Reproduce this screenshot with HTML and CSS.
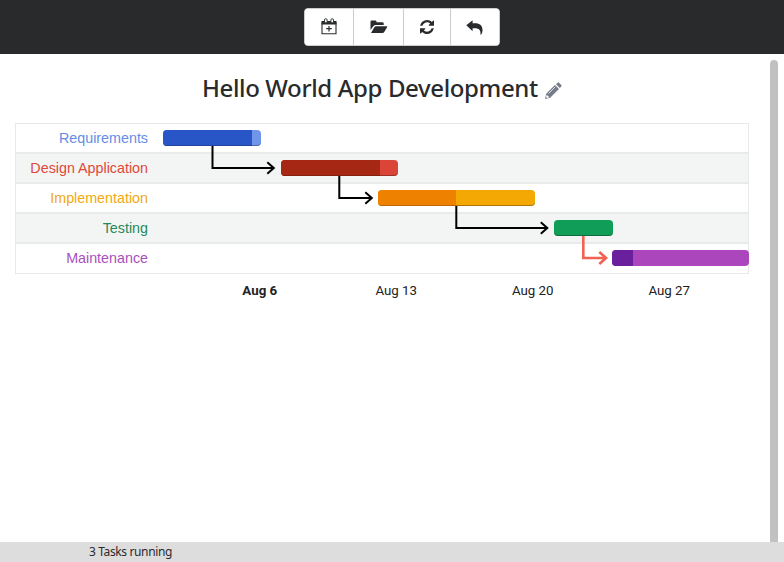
FILE: index.html
```html
<!DOCTYPE html>
<html lang="en">
<head>
<meta charset="utf-8">
<title>Hello World App Development</title>
<link rel="stylesheet" href="styles.css">
</head>
<body>
<header class="topbar">
  <div class="tools">
    <button class="tool tool-new" aria-label="New">
      <svg width="16" height="17" viewBox="0 0 16 17"><path fill="#292b2d" d="M.5 3h15v3.500H.5z"/><path fill="none" stroke="#292b2d" stroke-width="1.1" d="M1 4.500v11.300h14V4.500"/><path fill="#fff" stroke="#292b2d" stroke-width=".9" d="M3.500 4.800V2a1.300 1.300 0 0 1 2.600 0v2.800zM9.900 4.800V2a1.300 1.300 0 0 1 2.600 0v2.800z"/><path stroke="#292b2d" stroke-width="1.200" d="M5.200 10.700h5.600M8 7.900v5.600"/></svg>
    </button>
    <button class="tool tool-open" aria-label="Open">
      <svg width="18" height="14" viewBox="0 0 18 14"><path fill="#292b2d" d="M.5 10V1.700Q.5.500 1.700.500h3.600q1.200 0 1.200 1.200v.6h6q1.200 0 1.200 1.200V5H5.800Q4.300 5 3.300 6.200zM1 13l3.200-5.600q.7-1.200 2-1.200h10.300q1.300 0 .6 1.100l-2.700 4.500q-.7 1.200-2 1.200z"/></svg>
    </button>
    <button class="tool tool-sync" aria-label="Refresh">
      <svg width="14" height="14" viewBox="0 0 1536 1536"><path fill="#292b2d" d="M1511 928q0 5-1 7-64 268-268 434.500T764 1536q-146 0-282.500-55T238 1324l-129 129q-19 19-45 19t-45-19-19-45V960q0-26 19-45t45-19h448q26 0 45 19t19 45-19 45l-137 137q71 66 161 102t187 36q134 0 250-65t186-179q11-17 53-117 8-23 30-23h192q13 0 22.500 9.500t9.500 22.500zM1536 128v448q0 26-19 45t-45 19h-448q-26 0-45-19t-19-45 19-45l138-138Q969 256 768 256q-134 0-250 65T332 500q-11 17-53 117-8 23-30 23H50q-13 0-22.500-9.500T18 608v-7q65-268 270-434.500T768 0q146 0 284 55.500T1297 212l130-129q19-19 45-19t45 19 19 45z"/></svg>
    </button>
    <button class="tool tool-undo" aria-label="Undo">
      <svg width="17" height="15" viewBox="0 0 17 15"><path fill="#292b2d" d="M.3 5.300 6.600.300v3H9c5 0 7.500 2.600 7.500 6.900 0 1.500-.4 3-1.300 4.300-.4.500-.8.300-.7-.2.300-4-1.500-6-5.500-6H6.600v3z"/></svg>
    </button>
  </div>
</header>
<main class="content">
  <div class="page">
    <div class="heading">
      <h1 class="title">Hello World App Development</h1>
      <svg class="pencil" width="18" height="18" viewBox="0 0 18 18"><path fill="#777b8a" d="M1 17l1.200-5.200L11 3l4 4-8.800 8.800zM12 2.200 13.600.700q.7-.7 1.500 0l2.200 2.200q.7.800 0 1.500L15.800 6z"/><path fill="none" stroke="#dcdfe6" stroke-width="1" d="M4.500 11.500 11.300 4.700"/><path fill="#fff" d="m2.700 12.700 2.600 2.600-2.200.7-1.100-1.100z"/></svg>
    </div>
    <section class="chart">
      <div class="row requirements"><span class="label">Requirements</span><div class="track"><div class="bar" style="margin-left:0;width:98.200px"><i class="done" style="width:88.700px"></i></div></div></div>
      <div class="row design"><span class="label">Design Application</span><div class="track"><div class="bar" style="margin-left:117.300px;width:117.500px"><i class="done" style="width:99.600px"></i></div></div></div>
      <div class="row implementation"><span class="label">Implementation</span><div class="track"><div class="bar" style="margin-left:214.800px;width:156.500px"><i class="done" style="width:78.200px"></i></div></div></div>
      <div class="row testing"><span class="label">Testing</span><div class="track"><div class="bar" style="margin-left:390.500px;width:59px"></div></div></div>
      <div class="row maintenance"><span class="label">Maintenance</span><div class="track"><div class="bar" style="margin-left:449px;width:136.800px"><i class="done" style="width:21px"></i></div></div></div>
      <svg class="links" width="734" height="151" viewBox="15 123 734 151">
        <g fill="none" stroke="#000" stroke-width="2">
          <path d="M212.500 146V168H274M267.300 162.200l6.500 5.800-6.500 5.800"/>
          <path d="M339.300 176V198H372M365.300 192.200l6.500 5.800-6.500 5.800"/>
          <path d="M456.300 206V228H548M540.800 222.200l6.500 5.800-6.500 5.800"/>
          <path class="critical" d="M583.300 236V258H606M599.300 252l6.800 6-6.800 6"/>
        </g>
      </svg>
    </section>
    <div class="axis"><span class="tick current">Aug 6</span><span class="tick">Aug 13</span><span class="tick">Aug 20</span><span class="tick">Aug 27</span></div>
  </div>
  <div class="scrollbar"></div>
</main>
<footer class="status">3 Tasks running</footer>
</body>
</html>
```
FILE: styles.css
```css
* { box-sizing: border-box; }
body {
  margin: 0;
  height: 562px;
  display: flex;
  flex-direction: column;
  overflow: hidden;
  background: #fff;
  color: #292b2d;
  font-family: "Liberation Sans", Arial, sans-serif;
}
.topbar {
  height: 54px;
  background: #292a2c;
  display: flex;
  padding: 8px 0 0 304px;
}
.tools {
  display: flex;
  width: 196px;
  height: 38px;
  background: #fff;
  border: 1px solid #ccc;
  border-radius: 4px;
  overflow: hidden;
}
.tool {
  display: flex;
  align-items: center;
  justify-content: center;
  padding: 0;
  border: 0;
  border-right: 1px solid #ccc;
  background: #fff;
}
.tool-new { width: 49px; }
.tool-new svg { margin-top: -2px; }
.tool-open { width: 50px; }
.tool-sync { width: 47px; }
.tool-undo { width: 48px; border-right: 0; }
.tool-undo svg { margin-right: 2px; }
.content {
  flex: 1;
  display: flex;
  justify-content: space-between;
}
.page { width: 749px; padding-left: 15px; }
.heading {
  display: flex;
  align-items: center;
  height: 69px;
  padding-left: 187px;
}
.title {
  margin: -2px 0 0;
  width: 342px;
  white-space: nowrap;
  font: 500 24px/32px "Noto Sans", "Open Sans", sans-serif;
  letter-spacing: -.37px;
}
.pencil { margin-top: 4px; }
.chart {
  position: relative;
  height: 151px;
  border: 1px solid #e8e9e9;
}
.row {
  display: flex;
  align-items: center;
  height: 30px;
  padding-bottom: 1px;
  border-bottom: 2px solid #e9eaea;
}
.row:last-of-type { border-bottom-width: 1px; padding-bottom: 2px; }
.row:nth-child(even) { background: #f3f5f5; }
.label {
  flex: none;
  width: 132px;
  margin-right: 15.300px;
  text-align: right;
  font-size: 14.300px;
  line-height: 18px;
  white-space: nowrap;
}
.track { flex: none; width: 586px; }
.bar {
  height: 16px;
  border-radius: 4px;
  overflow: hidden;
  box-shadow: inset 0 -1px 0 rgba(0, 0, 0, .3);
}
.done { display: block; height: 100%; box-shadow: inset 0 -1px 0 rgba(0, 0, 0, .2); }
.requirements .label { color: #668de5; }
.requirements .bar { background: #7096eb; }
.requirements .done { background: #2956c6; }
.design .label { color: #e04838; }
.design .bar { background: #db4538; }
.design .done { background: #a52714; }
.implementation .label { color: #f2a90c; }
.implementation .bar { background: #f4a804; }
.implementation .done { background: #ee8100; }
.testing .label { color: #23895a; }
.testing .bar { background: #109d58; }
.maintenance .label { color: #a94fbd; }
.maintenance .bar { background: #ab46bc; box-shadow: none; }
.maintenance .done { background: #6a1f9c; box-shadow: none; }
.links {
  position: absolute;
  top: -1px;
  left: -1px;
}
.critical { stroke: #f26252; stroke-width: 2.600; }
.axis {
  display: grid;
  grid-template-columns: repeat(4, 136.500px);
  margin-left: 176.500px;
  padding-top: 7px;
}
.tick {
  text-align: center;
  font: 13.300px/19px Roboto, sans-serif;
  color: #222;
}
.tick.current { font-weight: 700; }
.scrollbar {
  width: 8px;
  margin: 6px 6px 0 0;
  border-radius: 4px 4px 0 0;
  background: #c1c1c1;
}
.status {
  height: 20px;
  padding-left: 89px;
  background: #ddd;
  font: 12px/20px "Noto Sans", "Open Sans", sans-serif;
  letter-spacing: -.37px;
}
```
